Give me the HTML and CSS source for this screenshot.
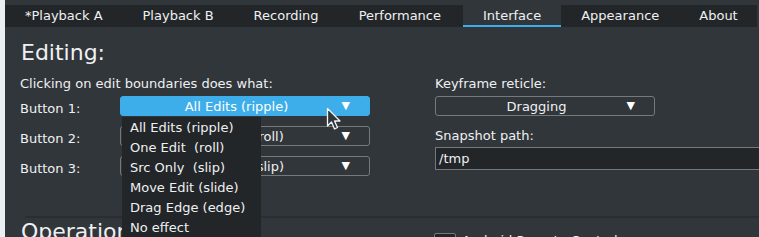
FILE: index.html
```html
<!DOCTYPE html>
<html lang="en">

<head>
    <meta charset="utf-8">
    <title>Preferences - Interface</title>
    <link rel="stylesheet" href="styles.css">
</head>

<body>

    <div class="edge"></div>

    <div class="window">
        <!-- tabs -->
        <nav class="tabs">
            <div class="tab">*Playback A</div>
            <div class="tab">Playback B</div>
            <div class="tab">Recording</div>
            <div class="tab">Performance</div>
            <div class="tab active">Interface</div>
            <div class="tab">Appearance</div>
            <div class="tab">About</div>
        </nav>

        <main class="page">
            <h2 class="section-title">Editing:</h2>

            <div class="columns">
                <div class="col-left">
                    <div class="label">Clicking on edit boundaries does what:</div>
                    <div class="button-grid">
                        <span class="row-label">Button 1:</span>
                        <div class="combo open">
                            <span class="combo-text">All Edits (ripple)</span>
                            <span class="arrow">▼</span>
                        </div>
                        <span class="row-label">Button 2:</span>
                        <div class="combo">
                            <span class="combo-text">One Edit  (roll)</span>
                            <span class="arrow">▼</span>
                        </div>
                        <span class="row-label">Button 3:</span>
                        <div class="combo">
                            <span class="combo-text">Src Only  (slip)</span>
                            <span class="arrow">▼</span>
                        </div>
                    </div>
                </div>

                <div class="col-right">
                    <div class="label">Keyframe reticle:</div>
                    <div class="combo small">
                        <span class="combo-text">Dragging</span>
                        <span class="arrow">▼</span>
                    </div>
                    <div class="label path-label">Snapshot path:</div>
                    <div class="text-input">/tmp</div>
                </div>
            </div>

            <hr class="divider">

            <div class="bottom-row">
                <h2 class="section-title">Operation</h2>
                <label class="check">
                    <span class="box"></span>
                    Android Remote Control
                </label>
            </div>
        </main>
    </div>

    <!-- popup of the Button 1 combo -->
    <ul class="popup">
        <li>All Edits (ripple)</li>
        <li>One Edit&nbsp; (roll)</li>
        <li>Src Only&nbsp; (slip)</li>
        <li>Move Edit (slide)</li>
        <li>Drag Edge (edge)</li>
        <li>No effect</li>
    </ul>

    <!-- mouse pointer -->
    <svg class="cursor" width="16" height="24" viewBox="0 0 16 24">
        <path d="M1.5 1.5 L1.5 19 L5.5 15 L8.5 22 L11.5 20.5 L8.5 14 L14 14 Z" fill="#31363b" stroke="#f5f5f5" stroke-width="1.3" stroke-linejoin="round"/>
    </svg>

</body>

</html>
```

FILE: styles.css
```css
* {
    box-sizing: border-box;
}

html,
body {
    height: 100%;
}

body {
    margin: 0;
    font-family: "DejaVu Sans", "Noto Sans", sans-serif;
    font-size: 13px;
    color: #eff0f1;
    background: #31363b;
    display: flex;
    overflow: hidden;
    position: relative;
}

/* light strip on the left edge */
.edge {
    width: 5px;
    flex: none;
    background: #eceff1;
}

.window {
    flex: 1;
    min-width: 0;
    padding-top: 5px;
}

/* Tabs */
.tabs {
    display: flex;
    height: 22px;
    margin-right: 2px;
    background: #232629;
}

.tab {
    padding: 0 20px;
    line-height: 21px;
    white-space: nowrap;
    color: #eff0f1;
}

.tab.active {
    background: #31363b;
    border-bottom: 2px solid #3daee9;
    margin-left: 2px;
}

/* Page */
.page {
    padding: 0 0 0 15px;
}

.section-title {
    margin: 0;
    font-weight: normal;
    font-size: 22px;
    line-height: 26px;
    padding: 13px 0 0 1px;
}

.columns {
    display: flex;
    margin-top: 10px;
}

.col-left {
    width: 415px;
}

.col-right {
    flex: 1;
}

.label {
    line-height: 16px;
    height: 16px;
}

.button-grid {
    display: grid;
    grid-template-columns: 100px 250px;
    row-gap: 10px;
    margin-top: 4px;
    align-items: center;
}

.row-label {
    padding-top: 5px;
}

/* Combo boxes */
.combo {
    height: 20px;
    border: 1px solid #76797c;
    border-radius: 3px;
    display: flex;
    align-items: center;
    padding-right: 17px;
    position: relative;
}

.combo.open {
    background: #3daee9;
    border-color: #3daee9;
    color: #ffffff;
}

.combo.small {
    width: 220px;
    margin-top: 4px;
}

.combo-text {
    flex: 1;
    text-align: center;
    white-space: pre;
}

.arrow {
    position: absolute;
    right: 19px;
    top: 2px;
    font-size: 11px;
    color: #ffffff;
}

.path-label {
    margin-top: 12px;
}

.text-input {
    height: 23px;
    margin-top: 3px;
    background: #232629;
    border: 1px solid #76797c;
    border-right: none;
    padding: 2px 3px;
    line-height: 17px;
}

.divider {
    border: none;
    border-top: 2px solid #2a2e32;
    margin: 40px 0 0 5px;
}

.bottom-row {
    display: flex;
}

.bottom-row .section-title {
    width: 414px;
    padding-top: 1px;
}

.check {
    display: flex;
    gap: 6px;
    padding-top: 15px;
    white-space: nowrap;
}

.box {
    width: 22px;
    height: 22px;
    border: 1px solid #76797c;
    background: #232629;
    border-radius: 2px;
}

/* Popup list over the page */
.popup {
    position: absolute;
    left: 122px;
    top: 117px;
    width: 139px;
    height: 130px;
    margin: 0;
    padding: 1px 0 0 8px;
    list-style: none;
    background: #232629;
}

.popup li {
    line-height: 20px;
    white-space: nowrap;
}

.cursor {
    position: absolute;
    left: 326px;
    top: 107px;
}
```
